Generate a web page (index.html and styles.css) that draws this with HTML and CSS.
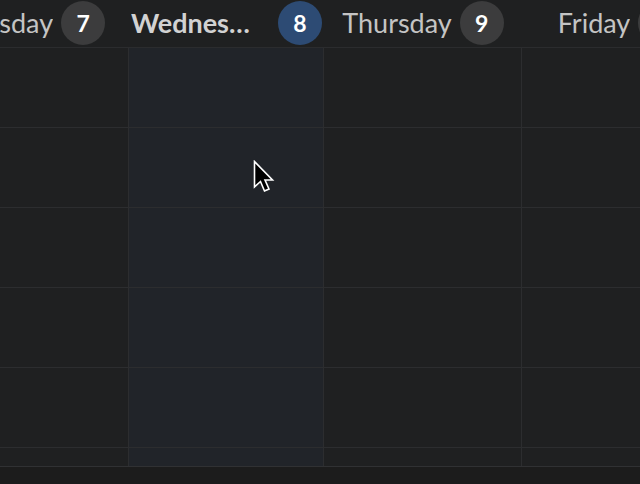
FILE: index.html
```html
<!DOCTYPE html>
<html>
<head>
<meta charset="utf-8">
<link rel="stylesheet" href="styles.css">
</head>
<body>
<div class="cal">
  <div class="head">
    <div class="day"><span class="label">Tuesday</span><span class="badge">7</span></div>
    <div class="day today"><span class="label">Wednesday</span><span class="badge">8</span></div>
    <div class="day"><span class="label">Thursday</span><span class="badge">9</span></div>
    <div class="day"><span class="label">Friday</span><span class="badge">10</span></div>
  </div>
  <div class="body">
    <div class="col"><div class="cell"></div><div class="cell"></div><div class="cell"></div><div class="cell"></div><div class="cell"></div><div class="cell last"></div></div>
    <div class="col sel"><div class="cell"></div><div class="cell"></div><div class="cell"></div><div class="cell"></div><div class="cell"></div><div class="cell last"></div></div>
    <div class="col"><div class="cell"></div><div class="cell"></div><div class="cell"></div><div class="cell"></div><div class="cell"></div><div class="cell last"></div></div>
    <div class="col"><div class="cell"></div><div class="cell"></div><div class="cell"></div><div class="cell"></div><div class="cell"></div><div class="cell last"></div></div>
  </div>
  <div class="foot"></div>
</div>
<svg class="cursor" width="24" height="38" viewBox="0 0 24 38">
  <path d="M1.5 1.5 L1.5 27 L7.5 21.5 L11.5 31 L16 29 L12 20 L19.5 20 Z" fill="#000" stroke="#fff" stroke-width="1.6" stroke-linejoin="miter"/>
</svg>
</body>
</html>
```
FILE: styles.css
```css
html, body {
  margin: 0;
  padding: 0;
  background: #1f2021;
  overflow: hidden;
  width: 640px;
  height: 484px;
}
.cal {
  position: relative;
  width: 640px;
  height: 484px;
  overflow: hidden;
  font-family: Lato, "Open Sans", sans-serif;
}
.head, .body {
  display: grid;
  grid-template-columns: 196px 195px 198px 196px;
  margin-left: -67px;
  width: 785px;
}
.head {
  height: 47px;
  border-bottom: 1px solid #2b2c2e;
  background: #1f2021;
}
.day {
  display: flex;
  align-items: center;
  justify-content: center;
  gap: 8px;
  padding: 0 0 2px 0;
  min-width: 0;
  color: #c4c4c4;
  font-size: 27px;
}
.label {
  white-space: nowrap;
  overflow: hidden;
  text-overflow: ellipsis;
  min-width: 0;
}
.today .label {
  font-weight: 700;
  color: #d2d2d2;
  max-width: 128px;
  margin-right: 11px;
}
.badge {
  flex: none;
  width: 44px;
  height: 44px;
  border-radius: 50%;
  background: #3c3c3d;
  color: #fff;
  font-weight: 700;
  font-size: 23px;
  display: flex;
  align-items: center;
  justify-content: center;
}
.today .badge {
  background: #2d4b74;
}
.body {
  height: 418px;
}
.col {
  border-right: 1px solid #2c2d2f;
  display: flex;
  flex-direction: column;
}
.col.sel {
  background: #212429;
}
.cell {
  height: 79px;
  border-bottom: 1px solid #2c2d2f;
  flex: none;
}
.cell.last {
  height: 17px;
  border-bottom: none;
}
.foot {
  height: 18px;
  border-top: 1px solid #303133;
  background: #1c1c1c;
}
.cursor {
  position: absolute;
  left: 253px;
  top: 160px;
}
```
